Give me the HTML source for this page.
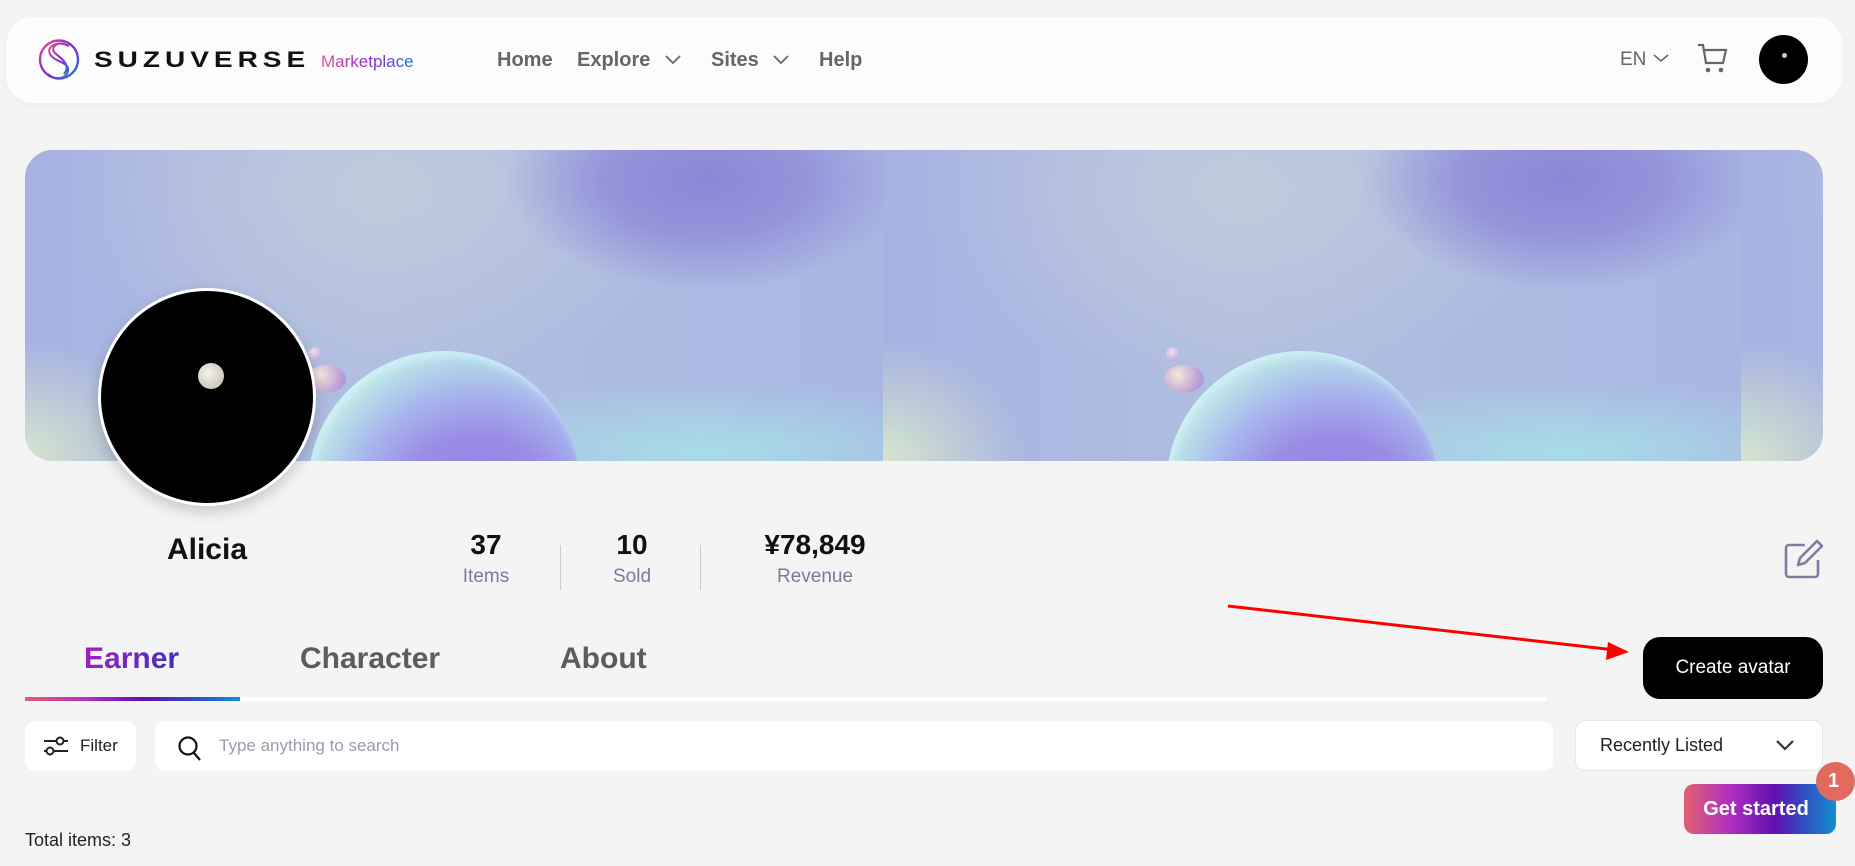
<!DOCTYPE html>
<html><head><meta charset="utf-8"><style>
*{box-sizing:border-box;margin:0;padding:0}
body{width:1855px;height:866px;background:#f4f4f4;font-family:"Liberation Sans",Arial,sans-serif;position:relative;overflow:hidden}
.abs{position:absolute}
.nav{left:6px;top:17px;width:1837px;height:86px;background:#fcfcfc;border-radius:28px;box-shadow:0 2px 8px rgba(0,0,0,.03)}
.navl{font-size:20px;font-weight:bold;color:#666;top:49px}
.banner{left:25px;top:150px;width:1798px;height:311px;border-radius:28px;overflow:hidden;background:#a9b4e1}
.tile{position:absolute;top:0;width:858px;height:311px;overflow:hidden;
background:
radial-gradient(ellipse 200px 110px at 680px 30px,#8a88d6 0,#9494da 50%,rgba(160,160,222,0) 100%),
radial-gradient(ellipse 320px 70px at 680px 300px,#a8dce8 0,rgba(168,220,232,0) 100%),
radial-gradient(ellipse 140px 120px at 0px 311px,#d6e6cc 0,rgba(214,230,204,0) 100%),
radial-gradient(ellipse 320px 200px at 360px 40px,#bfcbdc 0,rgba(191,203,220,0) 100%),
linear-gradient(90deg,#a6b2e2 0,#b0bee0 40%,#a8b6e2 100%)}
.sph{position:absolute;left:283px;top:201px;width:272px;height:272px;border-radius:50%;
background:radial-gradient(circle at 62% 62%,#8c7ce0 0,#9a8ce6 35%,#a8b8ec 55%,#b8e0e8 70%,#d8eed0 85%,#eef2c8 100%);box-shadow:inset 4px 6px 8px rgba(210,245,255,.7)}
.b1{position:absolute;left:283px;top:197px;width:14px;height:14px;border-radius:50%;background:radial-gradient(circle at 40% 35%,#f0e0f0,#b49ad8)}
.b2{position:absolute;left:281px;top:215px;width:40px;height:28px;border-radius:50%;background:radial-gradient(circle at 35% 35%,#f4e8d8,#c0a8d8 60%,#9a88d8)}
.av{left:98px;top:288px;width:218px;height:218px;border-radius:50%;background:#000;border:3px solid #fff;box-shadow:0 6px 14px rgba(0,0,0,.18)}
.num{font-size:28px;font-weight:bold;color:#111;text-align:center;width:200px;top:529px}
.lab{font-size:19px;color:#7c7a9c;text-align:center;width:200px;top:566px}
.tab{font-size:30px;font-weight:bold;color:#5c5c5c;top:642px}
</style></head><body>
<div class="abs nav"></div>
<svg class="abs" style="left:38px;top:38px" width="42" height="43" viewBox="0 0 42 43"><defs><linearGradient id="lg" x1="0" y1="0" x2="1" y2="1"><stop offset="0" stop-color="#e0508a"/><stop offset=".5" stop-color="#8a2bd0"/><stop offset="1" stop-color="#1a7ad8"/></linearGradient></defs><circle cx="21" cy="21.5" r="19" fill="none" stroke="url(#lg)" stroke-width="2.4"/><path d="M31 8C20 2 8 8 12 16S32 24 30 33 16 42 10 36M27 6C18 4 12 10 17 15S34 26 26 36" fill="none" stroke="url(#lg)" stroke-width="2"/></svg>
<div class="abs" style="left:94px;top:44px;font-size:28px;letter-spacing:5px;color:#111;font-weight:bold;transform:scaleY(.8);transform-origin:left center">SUZUVERSE</div>
<div class="abs" style="left:321px;top:52px;font-size:17px;background:linear-gradient(90deg,#e0508a,#8a2bd0 55%,#1a7ad8);-webkit-background-clip:text;color:transparent">Marketplace</div>
<div class="abs navl" style="left:497px">Home</div>
<div class="abs navl" style="left:577px">Explore</div>
<svg class="abs" style="left:665px;top:55px" width="16" height="10"><path d="M1 1l7 7 7-7" fill="none" stroke="#666" stroke-width="1.8"/></svg>
<div class="abs navl" style="left:711px">Sites</div>
<svg class="abs" style="left:773px;top:55px" width="16" height="10"><path d="M1 1l7 7 7-7" fill="none" stroke="#666" stroke-width="1.8"/></svg>
<div class="abs navl" style="left:819px">Help</div>
<div class="abs" style="left:1620px;top:49px;font-size:19px;color:#666">EN</div>
<svg class="abs" style="left:1653px;top:54px" width="16" height="10"><path d="M1 1l7 6 7-6" fill="none" stroke="#666" stroke-width="1.6"/></svg>
<svg class="abs" style="left:1697px;top:43px" width="32" height="32" viewBox="0 0 32 32"><path d="M1 2h5l3 18h17l3-13H8" fill="none" stroke="#666" stroke-width="2.2"/><circle cx="11" cy="27" r="2.3" fill="#666"/><circle cx="24" cy="27" r="2.3" fill="#666"/></svg>
<div class="abs" style="left:1759px;top:35px;width:49px;height:49px;border-radius:50%;background:#000"></div>
<div class="abs" style="left:1782px;top:53px;width:5px;height:5px;border-radius:50%;background:#ccc"></div>

<div class="abs banner">
<div class="tile" style="left:0"><div class="sph"></div><div class="b1"></div><div class="b2"></div></div>
<div class="tile" style="left:858px"><div class="sph"></div><div class="b1"></div><div class="b2"></div></div>
<div class="tile" style="left:1716px"></div>
</div>
<div class="abs av"></div>
<div class="abs" style="left:198px;top:363px;width:26px;height:26px;border-radius:50%;background:radial-gradient(circle at 40% 40%,#f4f2ea,#bdb8a8)"></div>

<div class="abs" style="left:107px;top:533px;width:200px;text-align:center;font-size:30px;font-weight:bold;color:#111">Alicia</div>
<div class="abs num" style="left:386px">37</div><div class="abs lab" style="left:386px">Items</div>
<div class="abs" style="left:560px;top:545px;width:1px;height:45px;background:#ccc"></div>
<div class="abs num" style="left:532px">10</div><div class="abs lab" style="left:532px">Sold</div>
<div class="abs" style="left:700px;top:545px;width:1px;height:45px;background:#ccc"></div>
<div class="abs num" style="left:715px">¥78,849</div><div class="abs lab" style="left:715px">Revenue</div>
<svg class="abs" style="left:1783px;top:538px" width="42" height="42" viewBox="0 0 42 42"><path d="M22 7H6a3 3 0 0 0-3 3v26a3 3 0 0 0 3 3h26a3 3 0 0 0 3-3V22" fill="none" stroke="#807ca0" stroke-width="2.6"/><path d="M34 3l5 5-17 17-7 2 2-7z" fill="none" stroke="#807ca0" stroke-width="2.6" stroke-linejoin="round"/></svg>

<div class="abs tab" style="left:84px;background:linear-gradient(90deg,#a020c0,#4030c0);-webkit-background-clip:text;color:transparent">Earner</div>
<div class="abs tab" style="left:300px">Character</div>
<div class="abs tab" style="left:560px">About</div>
<div class="abs" style="left:25px;top:697px;width:1522px;height:4px;background:#fff"></div>
<div class="abs" style="left:25px;top:697px;width:215px;height:4px;background:linear-gradient(90deg,#e06070,#b030c0 30%,#6010b0 55%,#3050c0 80%,#1090d0)"></div>

<svg class="abs" style="left:1225px;top:600px" width="420" height="60"><line x1="3" y1="6" x2="390" y2="50" stroke="#f00" stroke-width="3"/><path d="M404 52l-23 8 2-18z" fill="#f00"/></svg>
<div class="abs" style="left:1643px;top:637px;width:180px;height:62px;border-radius:17px;background:#000;color:#fff;font-size:19px;text-align:center;line-height:62px">Create avatar</div>

<div class="abs" style="left:25px;top:721px;width:111px;height:50px;border-radius:10px;background:#fff"></div>
<svg class="abs" style="left:43px;top:735px" width="26" height="22" viewBox="0 0 26 22"><path d="M1 6h24M1 16h24" stroke="#222" stroke-width="2"/><circle cx="17" cy="6" r="3.5" fill="#fff" stroke="#222" stroke-width="2"/><circle cx="7" cy="16" r="3.5" fill="#fff" stroke="#222" stroke-width="2"/></svg>
<div class="abs" style="left:80px;top:736px;font-size:17px;color:#222">Filter</div>
<div class="abs" style="left:155px;top:721px;width:1398px;height:50px;border-radius:10px;background:#fff"></div>
<svg class="abs" style="left:178px;top:735px" width="24" height="26"><circle cx="10" cy="11" r="8.5" fill="none" stroke="#111" stroke-width="2.2"/><path d="M16 18l6 7" stroke="#111" stroke-width="2.2"/></svg>
<div class="abs" style="left:219px;top:736px;font-size:17px;color:#9a9aaa">Type anything to search</div>
<div class="abs" style="left:1575px;top:720px;width:248px;height:51px;border-radius:10px;background:#fff;border:1px solid #e6e6e6"></div>
<div class="abs" style="left:1600px;top:735px;font-size:18px;color:#222">Recently Listed</div>
<svg class="abs" style="left:1776px;top:740px" width="18" height="12"><path d="M1 1l8 8 8-8" fill="none" stroke="#333" stroke-width="2.2"/></svg>

<div class="abs" style="left:1684px;top:784px;width:152px;height:50px;border-radius:10px;background:linear-gradient(90deg,#e06070,#b030c0 30%,#6010b0 60%,#3050c0 80%,#1090d0);color:#fff;font-size:20px;font-weight:bold;text-align:center;line-height:50px;padding-right:8px">Get started</div>
<div class="abs" style="left:1816px;top:762px;width:39px;height:39px;border-radius:50%;background:#e06a5e;color:#fff;font-size:20px;font-weight:bold;text-align:center;line-height:39px;padding-right:4px">1</div>

<div class="abs" style="left:25px;top:830px;font-size:18px;color:#222">Total items: 3</div>
</body></html>
